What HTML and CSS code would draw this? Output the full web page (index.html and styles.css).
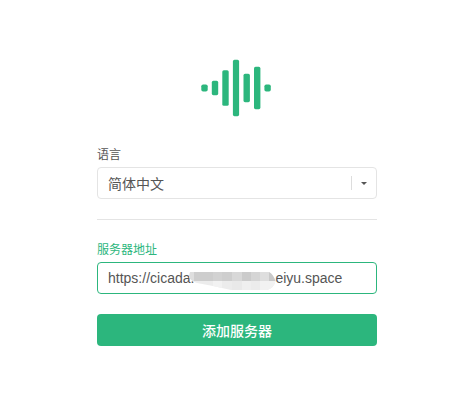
FILE: index.html
```html
<!DOCTYPE html>
<html lang="zh-CN">
<head>
    <meta charset="UTF-8">
    <meta name="viewport" content="width=device-width, initial-scale=1.0">
    <title>添加服务器</title>
    <link rel="stylesheet" href="styles.css">
</head>
<body>
    <div class="server-page">
        <svg class="logo" width="70" height="58" viewBox="0 0 70 58">
            <rect x="0.3" y="25.4" width="6.4" height="7.2" rx="1.8"/>
            <rect x="10.8" y="21.8" width="6.4" height="14.4" rx="1.6"/>
            <rect x="21.3" y="11.2" width="6.4" height="35.6" rx="1.6"/>
            <rect x="31.9" y="0.8" width="6.2" height="56.4" rx="1.6"/>
            <rect x="42.5" y="14.8" width="6.4" height="28.4" rx="1.6"/>
            <rect x="53" y="7.8" width="6.4" height="42.4" rx="1.6"/>
            <rect x="63.4" y="25.4" width="6.4" height="7.2" rx="1.8"/>
        </svg>
        <div class="form-group">
            <div class="label">语言</div>
            <div class="select">
                <span class="select-value">简体中文</span>
                <span class="select-separator"></span>
                <span class="select-arrow"></span>
            </div>
        </div>
        <div class="divider"></div>
        <div class="form-group active">
            <div class="label">服务器地址</div>
            <div class="input">
                <span>https://cicada.</span>
                <svg class="mask" width="87" height="20" viewBox="0 0 87 20">
                    <clipPath id="maskShape">
                        <path d="M1 1H80Q84 3 86.500 10Q85 17 78 19H42L24 15L8 12Q2 10 0 6Z"/>
                    </clipPath>
                    <g clip-path="url(#maskShape)">
                        <rect width="87" height="20" fill="#ececec"/>
                        <rect width="5" height="10" fill="#dedede"/>
                        <rect x="5" width="19" height="10" fill="#cdcdcd"/>
                        <rect x="24" width="9" height="10" fill="#d2d2d2"/>
                        <rect x="33" width="10" height="10" fill="#cecece"/>
                        <rect x="43" width="10" height="10" fill="#d8d8d8"/>
                        <rect x="53" width="9" height="10" fill="#cbcbcb"/>
                        <rect x="62" width="9" height="10" fill="#d5d5d5"/>
                        <rect x="71" width="9" height="10" fill="#dedede"/>
                        <rect x="80" width="7" height="10" fill="#c9c9c9"/>
                        <rect x="24" y="10" width="9" height="10" fill="#f2f2f2"/>
                        <rect x="43" y="10" width="10" height="10" fill="#e9e9e9"/>
                        <rect x="53" y="10" width="9" height="10" fill="#efefef"/>
                        <rect x="71" y="10" width="16" height="10" fill="#f2f2f2"/>
                    </g>
                </svg>
                <span>eiyu.space</span>
            </div>
        </div>
        <button class="submit" type="button">添加服务器</button>
    </div>
</body>
</html>
```

FILE: styles.css
```css
* {
    box-sizing: border-box;
}
body {
    margin: 0;
    background-color: #fff;
    color: #555;
    font-family: "Liberation Sans", "Noto Sans CJK SC", sans-serif;
    font-size: 14px;
}
.server-page {
    display: flex;
    flex-direction: column;
    width: 280px;
    margin-left: 97px;
    padding-top: 59px;
}
.logo {
    align-self: center;
    margin-right: 2px;
    margin-bottom: 29px;
    fill: #2cb67d;
}
.label {
    height: 21px;
    line-height: 18px;
    font-size: 12px;
}
.select, .input {
    display: flex;
    align-items: center;
    height: 32px;
    padding-left: 10px;
    border: 1px solid #e4e4e4;
    border-radius: 4px;
    white-space: nowrap;
}
.select-value {
    flex: 1;
}
.select-separator {
    width: 1px;
    height: 14px;
    background-color: #ddd;
}
.select-arrow {
    margin: 0 9px;
    border: 3px solid transparent;
    border-top-color: #555;
    border-bottom: 0;
}
.divider {
    height: 1px;
    margin: 20px 0 21px;
    background-color: #e4e4e4;
}
.active .label {
    color: #2cb67d;
}
.active .input {
    border-color: #2cb67d;
}
.mask {
    flex: none;
    margin: 5px -1px 0 -5px;
}
.submit {
    height: 32px;
    margin-top: 20px;
    padding: 0 0 1px;
    border: none;
    border-radius: 4px;
    background-color: #2cb67d;
    color: #fff;
    font: inherit;
    font-weight: 500;
    cursor: pointer;
}
```
